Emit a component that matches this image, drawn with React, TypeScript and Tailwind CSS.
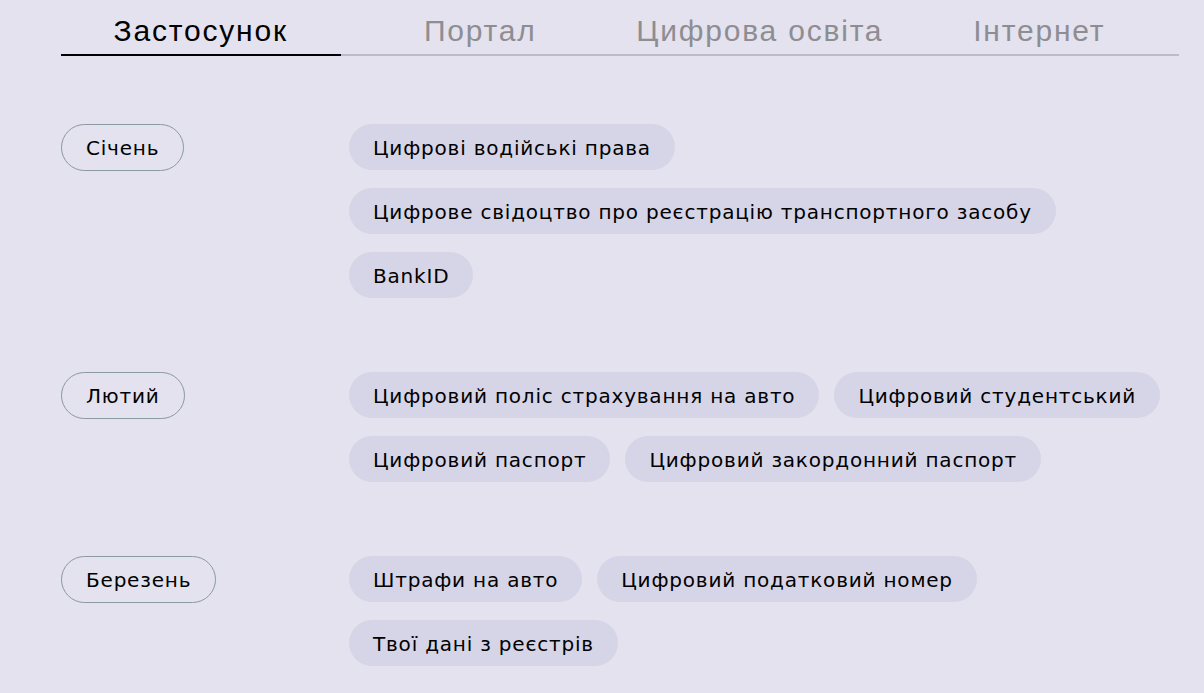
import React from "react";

const tabs = ["Застосунок", "Портал", "Цифрова освіта", "Інтернет"];

const sections: { month: string; items: string[] }[] = [
  {
    month: "Січень",
    items: [
      "Цифрові водійські права",
      "Цифрове свідоцтво про реєстрацію транспортного засобу",
      "BankID",
    ],
  },
  {
    month: "Лютий",
    items: [
      "Цифровий поліс страхування на авто",
      "Цифровий студентський",
      "Цифровий паспорт",
      "Цифровий закордонний паспорт",
    ],
  },
  {
    month: "Березень",
    items: ["Штрафи на авто", "Цифровий податковий номер", "Твої дані з реєстрів"],
  },
];

export default function App() {
  return (
    <div className="min-h-[693px] w-full bg-[#e3e2ee] pl-[61px] pr-[25px] font-['DejaVu_Sans',sans-serif] text-black">
      <div className="flex">
        {tabs.map((t, i) => (
          <div
            key={t}
            className={
              "flex h-[56px] flex-1 items-center justify-center border-b-2 pt-[8px] font-['Liberation_Sans',Arial,sans-serif] text-[30px] leading-none tracking-[1.8px] " +
              (i === 0 ? "border-black text-black" : "border-[#bcbbc6] text-[#8e8d92]")
            }
          >
            {t}
          </div>
        ))}
      </div>
      <div className="flex flex-col gap-[74px] pt-[68px]">
        {sections.map((s) => (
          <div key={s.month} className="flex items-start">
            <div className="flex w-[288px] shrink-0 items-start">
              <span className="flex h-[47px] items-center rounded-full border border-[#8a9a9d] px-[24px] pt-[1px] text-[20px] leading-none tracking-[0.8px]">
                {s.month}
              </span>
            </div>
            <div className="flex flex-wrap gap-x-[15px] gap-y-[18px]">
              {s.items.map((it) => (
                <span
                  key={it}
                  className="flex h-[46px] items-center rounded-full bg-[#d6d5e7] px-[24px] pt-[1px] text-[20px] leading-none tracking-[0.8px]"
                >
                  {it}
                </span>
              ))}
            </div>
          </div>
        ))}
      </div>
    </div>
  );
}
